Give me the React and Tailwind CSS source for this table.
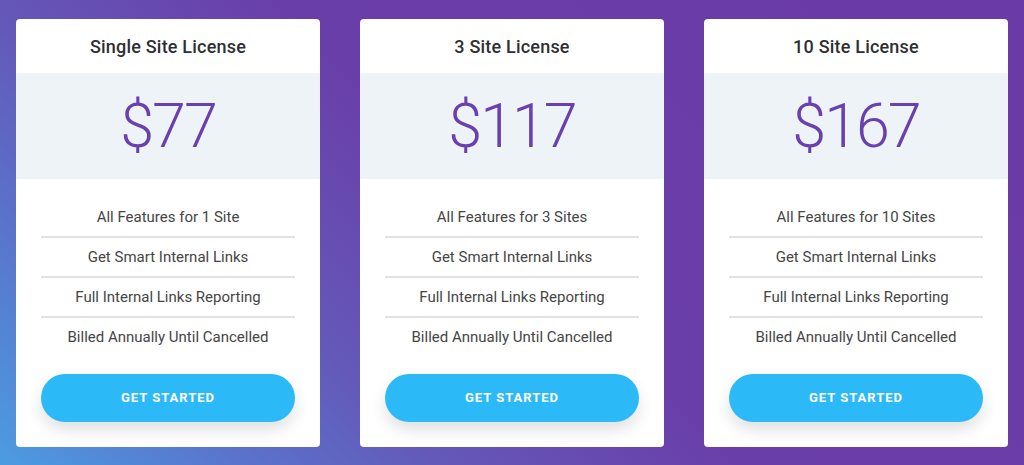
const plans = [
  { name: 'Single Site License', price: '$77', first: 'All Features for 1 Site' },
  { name: '3 Site License', price: '$117', first: 'All Features for 3 Sites' },
  { name: '10 Site License', price: '$167', first: 'All Features for 10 Sites' },
]

const rest = ['Get Smart Internal Links', 'Full Internal Links Reporting', 'Billed Annually Until Cancelled']

function PlanCard({ plan }) {
  const features = [plan.first, ...rest]
  return (
    <div className="w-[304px] bg-white rounded-[4px] flex flex-col overflow-hidden">
      <div className="h-[54px] flex items-center justify-center text-[18px] font-medium text-[#2f2f33] tracking-[0.2px]">
        {plan.name}
      </div>
      <div className="h-[106px] bg-[#edf3f7] flex items-center justify-center">
        <span className="text-[61px] font-light text-[#6a3fae] leading-none tracking-[-2px]">{plan.price}</span>
      </div>
      <ul className="px-[25px] pt-[19px]">
        {features.map((f, i) => (
          <li
            key={i}
            className={
              i < features.length - 1
                ? 'h-[40px] flex items-center justify-center border-b-2 border-[#e1e1e1] text-[15px] text-[#454545]'
                : 'h-[38px] flex items-center justify-center text-[15px] text-[#454545]'
            }
          >
            {f}
          </li>
        ))}
      </ul>
      <div className="px-[25px] pt-[18px] pb-[25px]">
        <button className="w-full h-[48px] rounded-full bg-[#2bbaf7] text-white text-[13px] font-bold tracking-[1px] shadow-[0_8px_16px_rgba(0,0,0,0.12)]">
          GET STARTED
        </button>
      </div>
    </div>
  )
}

export default function App() {
  return (
    <div
      className="w-[1024px] h-[465px] bg-[linear-gradient(45deg,#4c9ce2_0%,#5a74cc_16%,#6458b8_30%,#6a3ea8_50%,#6a3aa6_100%)] pl-[16px] pt-[19px] flex items-start gap-[40px]"
      style={{ fontFamily: 'Roboto, "Liberation Sans", sans-serif' }}
    >
      {plans.map((p) => (
        <PlanCard key={p.name} plan={p} />
      ))}
    </div>
  )
}
